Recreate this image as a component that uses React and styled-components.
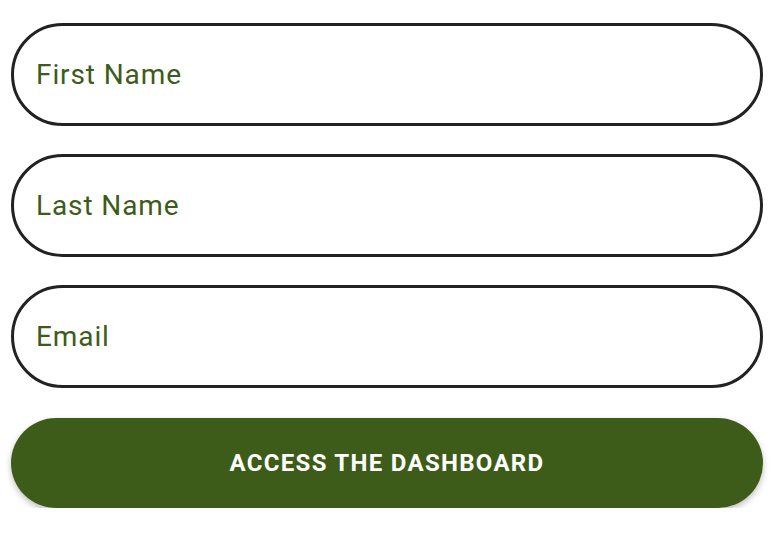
import React from 'react'
import styled, { createGlobalStyle } from 'styled-components'

const GlobalStyle = createGlobalStyle`
  body {
    margin: 0;
    background: #ffffff;
    font-family: Roboto, "Noto Sans", sans-serif;
  }
`

const Form = styled.form`
  display: flex;
  flex-direction: column;
  gap: 28px;
  width: 752px;
  padding: 23px 0 0 11px;
`

const Field = styled.input`
  box-sizing: border-box;
  width: 100%;
  height: 103px;
  padding: 0 22px;
  border: 3px solid #222222;
  border-radius: 52px;
  background: #ffffff;
  font-family: Roboto, "Noto Sans", sans-serif;
  font-size: 28px;
  letter-spacing: 0.9px;
  color: #3d5c19;
  outline: none;

  &::placeholder {
    color: #3d5c19;
    opacity: 1;
  }
`

const Submit = styled.button`
  height: 90px;
  margin-top: 2px;
  border: none;
  border-radius: 45px;
  background: #3e5c19;
  color: #ffffff;
  font-family: Roboto, "Noto Sans", sans-serif;
  font-weight: 700;
  font-size: 24px;
  letter-spacing: 1.3px;
  text-transform: uppercase;
  box-shadow: 0 3px 6px rgba(0, 0, 0, 0.25);
  cursor: pointer;
`

const App = () => {
  return (
    <>
      <GlobalStyle />
      <Form onSubmit={(e) => e.preventDefault()}>
        <Field type="text" placeholder="First Name" />
        <Field type="text" placeholder="Last Name" />
        <Field type="email" placeholder="Email" />
        <Submit type="submit">Access the dashboard</Submit>
      </Form>
    </>
  )
}

export default App
